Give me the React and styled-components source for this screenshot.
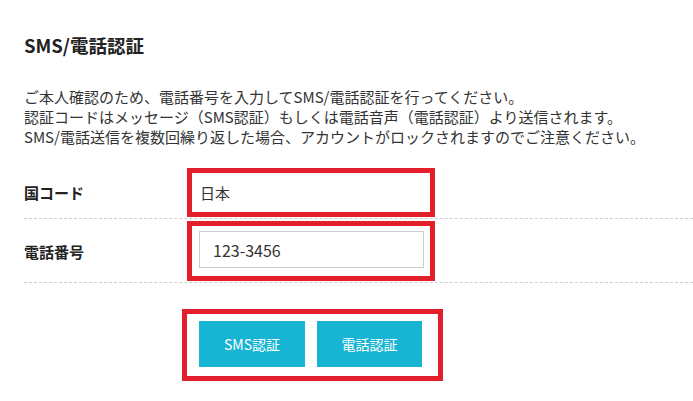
import styled, { createGlobalStyle } from "styled-components";

const GlobalStyle = createGlobalStyle`
   html, body {
      margin: 0;
      padding: 0;
      background: #ffffff;
   }
   body {
      font-family: "Noto Sans CJK JP", "Noto Sans", sans-serif;
      color: #333333;
   }
`;

const Page = styled.div`
   padding: 33px 0 0 24px;
   width: 669px;
`;
const Title = styled.h2`
   margin: 0;
   font-size: 18.5px;
   line-height: 24px;
   font-weight: 700;
   color: #222222;
`;
const Lead = styled.p`
   margin: 30px 0 0;
   font-size: 15px;
   line-height: 20px;
   color: #333333;
   white-space: nowrap;
`;
const Table = styled.div`
   margin-top: 16px;
`;
const Row = styled.div`
   display: flex;
   align-items: center;
   padding: ${(props) => props.pad || "0"};
   border-bottom: 1px dashed #cfcfcf;
`;
const Label = styled.div`
   width: 163px;
   flex-shrink: 0;
   font-size: 15px;
   font-weight: 700;
   color: #222222;
`;
const Highlight = styled.div`
   box-sizing: border-box;
   border: 5px solid #e31f2b;
   width: ${(props) => props.width || "248px"};
   height: ${(props) => props.height};
   padding: ${(props) => props.pad || "0"};
   display: flex;
   align-items: center;
`;
const Value = styled.span`
   font-size: 15px;
   color: #333333;
`;
const Input = styled.input`
   box-sizing: border-box;
   width: 225px;
   height: 37px;
   border: 1px solid #cccccc;
   padding: 0 13px;
   font-family: inherit;
   font-size: 16px;
   color: #333333;
   outline: none;
   background: #ffffff;
`;
const Actions = styled.div`
   margin: 26px 0 0 158px;
`;
const ButtonBox = styled(Highlight)`
   gap: 12px;
   align-items: flex-start;
`;
const Button = styled.button`
   box-sizing: border-box;
   width: ${(props) => props.width || "106px"};
   height: 46px;
   border: none;
   background: #18b4d4;
   color: #ffffff;
   font-family: inherit;
   font-size: 14px;
   cursor: pointer;
`;

const App = () => {
   return (
      <>
         <GlobalStyle />
         <Page>
            <Title>SMS/電話認証</Title>
            <Lead>
               ご本人確認のため、電話番号を入力してSMS/電話認証を行ってください。
               <br />
               認証コードはメッセージ（SMS認証）もしくは電話音声（電話認証）より送信されます。
               <br />
               SMS/電話送信を複数回繰り返した場合、アカウントがロックされますのでご注意ください。
            </Lead>
            <Table>
               <Row pad="5px 0 1px">
                  <Label>国コード</Label>
                  <Highlight height="49px" pad="0 0 0 8px">
                     <Value>日本</Value>
                  </Highlight>
               </Row>
               <Row pad="2px 0 1px">
                  <Label>電話番号</Label>
                  <Highlight height="60px" pad="0 0 3px 7px">
                     <Input defaultValue="123-3456" />
                  </Highlight>
               </Row>
            </Table>
            <Actions>
               <ButtonBox width="261px" height="72px" pad="7px 0 0 12px">
                  <Button>SMS認証</Button>
                  <Button width="105px">電話認証</Button>
               </ButtonBox>
            </Actions>
         </Page>
      </>
   );
};

export default App;
